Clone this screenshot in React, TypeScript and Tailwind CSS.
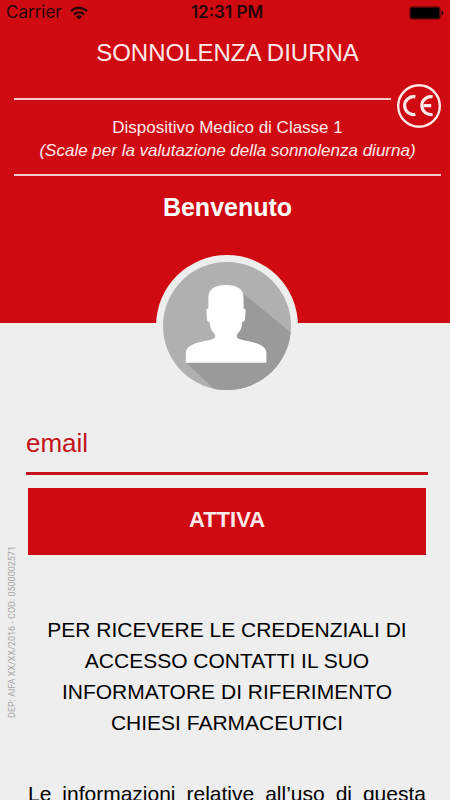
import { useState } from "react";

function WifiIcon() {
  return (
    <svg width="18" height="14" viewBox="0 0 18 14" fill="none" stroke="#24060a" strokeWidth="2.4" aria-hidden="true">
      <path d="M1 5.2a11.4 11.4 0 0 1 16 0" />
      <path d="M3.9 8.500a7.200 7.200 0 0 1 10.200 0" />
      <path d="M9 13.600l-3-3.100a4.200 4.200 0 0 1 6 0z" fill="#24060a" stroke="none" />
    </svg>
  );
}

function BatteryIcon() {
  return (
    <svg width="35" height="14" viewBox="0 0 35 14" aria-hidden="true">
      <rect x="0.5" y="0.5" width="31" height="13" rx="3" fill="#4a060a" />
      <rect x="2" y="2" width="28" height="10" rx="1.5" fill="#000" />
      <path d="M32.5 4.5c2.4.6 2.4 4.4 0 5z" fill="#24060a" />
    </svg>
  );
}

function StatusBar() {
  return (
    <div className="grid h-6.5 grid-cols-3 items-center px-1.5 font-['Inter','Liberation_Sans',sans-serif] text-[17px] text-[#24060a]">
      <div className="flex items-center gap-2">
        <span>Carrier</span>
        <WifiIcon />
      </div>
      <span className="pl-1 text-center font-semibold whitespace-nowrap">12:31 PM</span>
      <div className="flex justify-end">
        <BatteryIcon />
      </div>
    </div>
  );
}

function CeMark() {
  return (
    <svg
      className="absolute -top-3.5 right-0"
      width="44"
      height="44"
      viewBox="0 0 44 44"
      fill="none"
      stroke="#ffe9ea"
      role="img"
      aria-label="CE"
    >
      <circle cx="22" cy="22" r="20.8" strokeWidth="2.4" />
      <path d="M18.4 12.9a8.9 8.9 0 1 0 0 17.4" strokeWidth="3.2" />
      <path d="M35.6 12.9a8.9 8.9 0 1 0 0 17.4M26.8 21.6h7.4" strokeWidth="3.2" />
    </svg>
  );
}

function Avatar() {
  return (
    <svg className="mx-auto -mt-17.25 block" width="144" height="144" viewBox="0 0 144 144" aria-hidden="true">
      <defs>
        <clipPath id="disc">
          <circle cx="72" cy="72" r="64" />
        </clipPath>
      </defs>
      <circle cx="72" cy="72" r="71" fill="#eeeeee" />
      <circle cx="72" cy="72" r="64" fill="#b0b0b0" />
      <path d="M87 38.5L140 82v62H69L30.7 108.5L72 100z" fill="#9a9a9a" clipPath="url(#disc)" />
      <path
        d="M71 31c-11 0-17.6 4-17.6 12.500V54.500c-1.600.2-2.200 1-2 2.700l.6 8.300c.1 1.500 1 2.200 2.700 2.500.3 4 1 7.500 2.800 9.500 1.500 1.400 2.500 2.500 2.500 4v2.500c-5 2.500-10 2.500-16 4.300-7.500 2.200-13 5.200-13.200 10.700v9.700h80.600v-9.700c-.2-5.500-5.900-8.500-13.400-10.700-6-1.800-11-1.800-16-4.300v-2.500c0-1.500 1-2.600 2.400-4 1.800-2 2.600-5.500 2.900-9.500 1.700-.3 2.400-1 2.600-2.500l.7-8.300c.2-1.700-.4-2.500-2-2.700V43.500C88.600 35 82 31 71 31z"
        fill="#fff"
      />
    </svg>
  );
}

export default function App() {
  const [email, setEmail] = useState("");

  return (
    <div className="h-screen overflow-hidden bg-[#eeeeee] font-['Liberation_Sans',Arial,sans-serif] text-black">
      <header className="bg-[#d00a11] pb-25">
        <StatusBar />
        <div className="pr-2.25 pl-3.5 text-center text-[#ffe9ea]">
          <h1 className="pt-2.75 text-2xl leading-8">SONNOLENZA DIURNA</h1>
          <div className="relative mt-7.25">
            <hr className="mr-12.5 border-t-2 border-[#ffc9cb]" />
            <CeMark />
          </div>
          <div className="mt-4 border-b-2 border-[#ffc9cb] pb-3 text-[17px] leading-[23px]">
            <p>Dispositivo Medico di Classe 1</p>
            <p className="italic">(Scale per la valutazione della sonnolenza diurna)</p>
          </div>
          <h2 className="mt-3.75 text-[25px] leading-8 font-bold text-white">Benvenuto</h2>
        </div>
      </header>

      <main className="flex pr-6">
        <aside className="mt-[223px] flex w-7 shrink-0 items-start pl-1.5">
          <span className="rotate-180 font-['Roboto','Liberation_Sans',sans-serif] text-[9px] leading-3 whitespace-nowrap text-[#a4a4a4] [writing-mode:vertical-rl]">
            DEP: AIFA XX/XX/2016 - COD: 0500002571
          </span>
        </aside>

        <div className="min-w-0 flex-1">
          <Avatar />

          <form onSubmit={(e) => e.preventDefault()}>
            <div className="-mx-0.5 mt-6 border-b-3 border-[#c4131b]">
              <input
                type="email"
                aria-label="email"
                placeholder="email"
                value={email}
                onChange={(e) => setEmail(e.target.value)}
                className="block h-12.5 w-full bg-transparent pb-2 text-[26px] text-[#c4131b] outline-none placeholder:text-[#c4131b]"
              />
            </div>
            <button type="submit" className="mt-3.25 block h-16.75 w-full bg-[#d00a11] pb-1 text-[22px] font-bold text-[#ffe9ea]">
              ATTIVA
            </button>
          </form>

          <p className="mt-14.75 px-4 text-center text-[21px] leading-[31px]">
            PER RICEVERE LE CREDENZIALI DI ACCESSO CONTATTI IL SUO INFORMATORE DI RIFERIMENTO CHIESI FARMACEUTICI
          </p>
          <p className="mt-10 text-[21px] leading-[31px] [text-align-last:justify]">
            Le informazioni relative all’uso di questa
          </p>
        </div>
      </main>
    </div>
  );
}
